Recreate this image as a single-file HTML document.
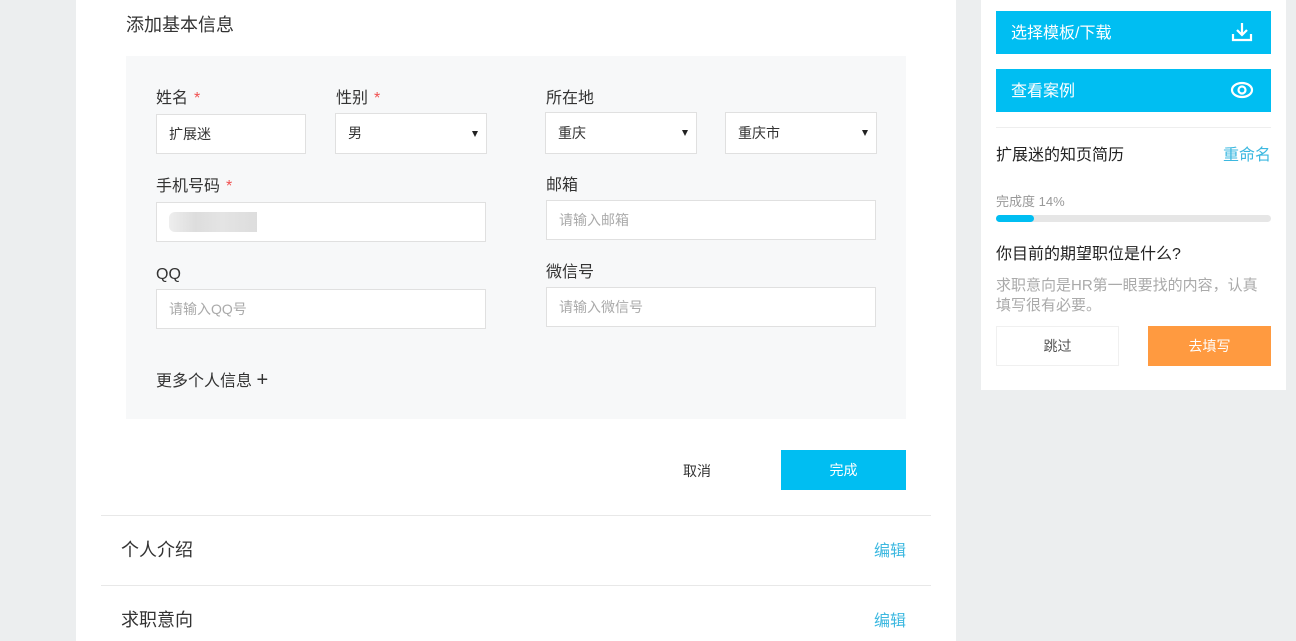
<!DOCTYPE html>
<html><head><meta charset="utf-8"><style>
*{margin:0;padding:0;box-sizing:border-box}
body{width:1296px;height:641px;background:#eceeef;font-family:"Liberation Sans","Noto Sans CJK SC",sans-serif;position:relative;overflow:hidden;color:#333}
.a{position:absolute;line-height:1.2}
.main{left:76px;top:0;width:880px;height:641px;background:#fff}
.gray{left:126px;top:56px;width:780px;height:363px;background:#f7f8f9}
.lbl{font-size:16px;color:#333}
.star{color:#f05050;margin-left:6px}
.inp{background:#fff;border:1px solid #e0e0e0;font-size:14px;padding-left:12px;display:flex;align-items:center}
.ph{color:#aaa;font-size:14px}
.tri{position:absolute;right:8px;top:50%;margin-top:-3px;width:0;height:0;border-left:3px solid transparent;border-right:3px solid transparent;border-top:6px solid #222}
.side{left:981px;top:0;width:305px;height:390px;background:#fff}
.btn{background:#00bef2;color:#fff;font-size:16px;display:flex;align-items:center;padding-left:15px;line-height:1}
</style></head><body>
<div class="a main"></div>
<div class="a" style="left:126px;top:15px;font-size:18px;color:#333">添加基本信息</div>
<div class="a gray"></div>
<div class="a lbl" style="left:156px;top:89px">姓名<span class="star">*</span></div>
<div class="a lbl" style="left:336px;top:89px">性别<span class="star">*</span></div>
<div class="a lbl" style="left:546px;top:89px">所在地</div>
<div class="a inp" style="left:156px;top:114px;width:150px;height:40px">扩展迷</div>
<div class="a inp" style="left:335px;top:113px;width:152px;height:41px">男<span class="tri"></span></div>
<div class="a inp" style="left:545px;top:112px;width:152px;height:42px">重庆<span class="tri"></span></div>
<div class="a inp" style="left:725px;top:112px;width:152px;height:42px">重庆市<span class="tri"></span></div>
<div class="a lbl" style="left:156px;top:177px">手机号码<span class="star">*</span></div>
<div class="a lbl" style="left:546px;top:176px">邮箱</div>
<div class="a inp" style="left:156px;top:202px;width:330px;height:40px"><div style="width:88px;height:20px;background:linear-gradient(90deg,#eee,#ddd 30%,#e4e4e4 60%,#ddd);border-radius:6px 0 0 6px"></div></div>
<div class="a inp" style="left:546px;top:200px;width:330px;height:40px"><span class="ph">请输入邮箱</span></div>
<div class="a lbl" style="left:156px;top:265px">QQ</div>
<div class="a lbl" style="left:546px;top:263px">微信号</div>
<div class="a inp" style="left:156px;top:289px;width:330px;height:40px"><span class="ph">请输入QQ号</span></div>
<div class="a inp" style="left:546px;top:287px;width:330px;height:40px"><span class="ph">请输入微信号</span></div>
<div class="a" style="left:156px;top:372px;font-size:16px;color:#333">更多个人信息 <span style="font-size:20px;line-height:16px">+</span></div>
<div class="a" style="left:683px;top:463px;font-size:14px;color:#333">取消</div>
<div class="a" style="left:781px;top:450px;width:125px;height:40px;background:#00bef2;color:#fff;font-size:14px;display:flex;align-items:center;justify-content:center;line-height:1">完成</div>
<div class="a" style="left:101px;top:515px;width:830px;height:1px;background:#e8e8e8"></div>
<div class="a" style="left:121px;top:540px;font-size:18px;color:#333">个人介绍</div>
<div class="a" style="left:874px;top:542px;font-size:16px;color:#3cb8e0">编辑</div>
<div class="a" style="left:101px;top:585px;width:830px;height:1px;background:#e8e8e8"></div>
<div class="a" style="left:121px;top:610px;font-size:18px;color:#333">求职意向</div>
<div class="a" style="left:874px;top:612px;font-size:16px;color:#3cb8e0">编辑</div>

<div class="a side"></div>
<div class="a btn" style="left:996px;top:11px;width:275px;height:43px;padding-top:2px">选择模板/下载
<svg style="position:absolute;right:18px;top:11px" width="22" height="20" viewBox="0 0 22 20" fill="none" stroke="#fff" stroke-width="2.2"><path d="M11 1v12M6 8l5 5 5-5M2 12v6h18v-6"/></svg></div>
<div class="a btn" style="left:996px;top:69px;width:275px;height:43px;padding-top:2px">查看案例
<svg style="position:absolute;right:17px;top:12px" width="24" height="18" viewBox="0 0 24 18" fill="none" stroke="#fff" stroke-width="2.2"><ellipse cx="12" cy="9" rx="10" ry="7"/><circle cx="12" cy="9" r="3.5"/></svg></div>
<div class="a" style="left:996px;top:127px;width:275px;height:1px;background:#eee"></div>
<div class="a" style="left:996px;top:146px;font-size:16px;color:#222">扩展迷的知页简历</div>
<div class="a" style="left:1223px;top:146px;font-size:16px;color:#3cb8e0">重命名</div>
<div class="a" style="left:996px;top:194px;font-size:13px;color:#999">完成度 14%</div>
<div class="a" style="left:996px;top:215px;width:275px;height:7px;background:#e6e6e6;border-radius:4px"></div>
<div class="a" style="left:996px;top:215px;width:38px;height:7px;background:#00bef2;border-radius:4px"></div>
<div class="a" style="left:996px;top:245px;font-size:16px;color:#222">你目前的期望职位是什么?</div>
<div class="a" style="left:996px;top:276px;width:262px;font-size:15px;line-height:20px;color:#aaa">求职意向是HR第一眼要找的内容，认真填写很有必要。</div>
<div class="a" style="left:996px;top:326px;width:123px;height:40px;border:1px solid #f0f0f0;font-size:14px;color:#555;display:flex;align-items:center;justify-content:center;line-height:1">跳过</div>
<div class="a" style="left:1148px;top:326px;width:123px;height:40px;background:#ff9a40;font-size:14px;color:#fff;display:flex;align-items:center;justify-content:center;line-height:1">去填写</div>
</body></html>
